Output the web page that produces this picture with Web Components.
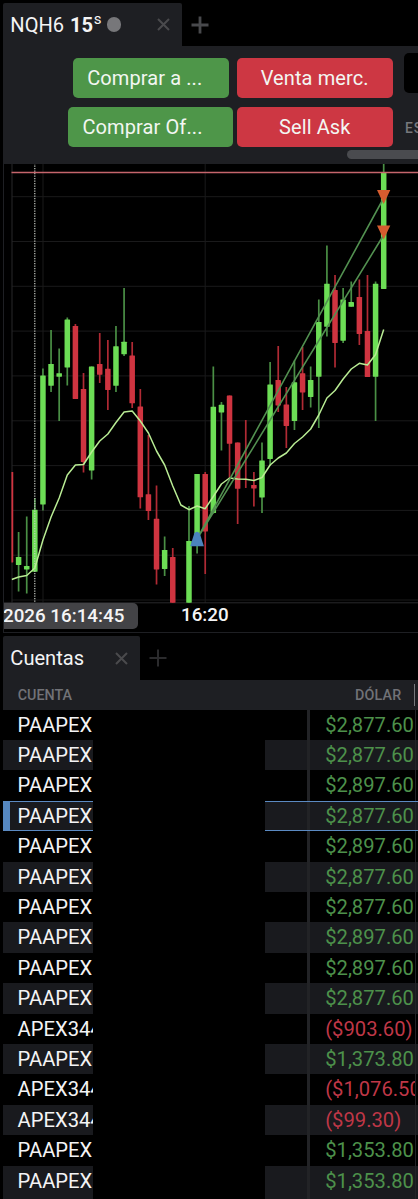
<!DOCTYPE html>
<html lang="es">
<head>
<meta charset="utf-8">
<title>NQH6</title>
<style>
    body {
        margin: 0;
        background: #000;
        color: #f4f4f5;
        font-family: Roboto, "Liberation Sans", sans-serif;
        overflow: hidden;
    }
</style>
</head>
<body>
<trading-app></trading-app>
<script>
class PanelTab extends HTMLElement {
    constructor() {
        super();
        this.attachShadow({ mode: 'open' });
    }
    connectedCallback() {
        this.shadowRoot.innerHTML = `
            <style>
                :host {
                    display: flex;
                    height: 43px;
                    align-items: stretch;
                }
                .tab {
                    display: flex;
                    align-items: center;
                    justify-content: space-between;
                    width: var(--tab-width);
                    box-sizing: border-box;
                    padding: 0 12.3px 0 7.3px;
                    background: #1e1f23;
                    border-radius: 2px 2px 0 0;
                    font-size: 20.1px;
                    white-space: nowrap;
                }
                svg { display: block; fill: none; }
                .close { stroke: #4a4a4d; stroke-width: 2; }
                .add {
                    stroke: var(--add-color, #48494c);
                    stroke-width: var(--add-weight, 2.8);
                    margin: auto 0 auto 8.5px;
                }
            </style>
            <div class="tab">
                <slot></slot>
                <svg class="close" width="13" height="13" viewBox="0 0 13 13"><path d="M1 1 12 12M12 1 1 12"/></svg>
            </div>
            <svg class="add" width="18" height="18" viewBox="0 0 18 18"><path d="M9 0.5V17.5M0.5 9H17.5"/></svg>
        `;
    }
}
customElements.define('panel-tab', PanelTab);

class TradeButton extends HTMLElement {
    constructor() {
        super();
        this.attachShadow({ mode: 'open' });
    }
    connectedCallback() {
        this.shadowRoot.innerHTML = `
            <style>
                :host { display: block; }
                button {
                    display: block;
                    width: 100%;
                    height: 40px;
                    padding: 0 1px 0 0;
                    border: 0;
                    border-radius: 5px;
                    background: #4e9649;
                    color: #f3f6f2;
                    font: 20px Roboto, sans-serif;
                    letter-spacing: 0.1px;
                    white-space: nowrap;
                }
                :host([side="buy"]) button { text-align: left; padding-left: 14.5px; }
                :host([side="sell"]) button { background: #cd3743; }
            </style>
            <button><slot></slot></button>
        `;
    }
}
customElements.define('trade-button', TradeButton);

class OrderBar extends HTMLElement {
    constructor() {
        super();
        this.attachShadow({ mode: 'open' });
    }
    connectedCallback() {
        this.shadowRoot.innerHTML = `
            <style>
                :host {
                    display: block;
                    position: relative;
                    height: 118px;
                    box-sizing: border-box;
                    padding-top: 11.7px;
                    background: #1e1f23;
                    overflow: hidden;
                }
                .row {
                    display: flex;
                    gap: 8.5px;
                    margin: 0 0 9.3px 69.7px;
                }
                .row.second { gap: 4.3px; margin-left: 65px; }
                trade-button { width: 156px; flex: none; }
                .second trade-button[side="buy"] { width: 165px; }
                .qty {
                    flex: none;
                    width: 60px;
                    height: 40px;
                    margin: -4.5px 0 0 2.5px;
                    border-radius: 5px;
                    background: #000;
                }
                .label {
                    flex: none;
                    margin: 13.5px 0 0 7.5px;
                    color: #77787c;
                    font-size: 13.8px;
                    font-weight: 500;
                    letter-spacing: 0.8px;
                }
                .scroll {
                    position: absolute;
                    left: 343.5px;
                    top: 104px;
                    width: 100px;
                    height: 9px;
                    border-radius: 5px;
                    background: #4a4b4f;
                }
            </style>
            <div class="row">
                <trade-button side="buy">Comprar a ...</trade-button>
                <trade-button side="sell">Venta merc.</trade-button>
                <div class="qty"></div>
            </div>
            <div class="row second">
                <trade-button side="buy">Comprar Of...</trade-button>
                <trade-button side="sell">Sell Ask</trade-button>
                <div class="label">ES</div>
            </div>
            <div class="scroll"></div>
        `;
    }
}
customElements.define('order-bar', OrderBar);

// [slot, side, high, body top, body bottom, low]
const CANDLES = [
    [0, 'r', 472, 472, 562.5, 562.5],
    [1, 'g', 532, 557, 565, 591.5],
    [2, 'g', 516.5, 566, 569.5, 593.5],
    [3, 'g', 498, 509.7, 571.7, 571.7],
    [4, 'g', 368.5, 375.5, 504.5, 510.5],
    [5, 'g', 330, 364, 385.7, 392],
    [6, 'g', 348.5, 373.2, 376.7, 421],
    [7, 'g', 317.5, 319.5, 367.5, 385.5],
    [8, 'r', 324, 326, 399, 399],
    [9, 'r', 373, 389, 462, 472.5],
    [10, 'g', 366.5, 366.5, 470.5, 479.5],
    [11, 'r', 333, 364, 374.7, 383],
    [12, 'r', 340, 368.7, 390, 410],
    [13, 'g', 326, 346.3, 385.7, 392],
    [14, 'g', 288, 341.8, 354.2, 356],
    [15, 'r', 342, 355.5, 403.3, 408],
    [16, 'r', 389, 406.5, 497.3, 508.5],
    [17, 'r', 435, 494.3, 511, 520],
    [18, 'r', 485.5, 518.7, 569.5, 584.5],
    [19, 'g', 536.5, 550, 569, 576],
    [20, 'r', 548, 557, 602.7, 602.7],
    [22, 'g', 506, 541, 602.7, 602.7],
    [23, 'g', 474, 474, 540, 553.5],
    [24, 'r', 472, 474, 531.5, 574],
    [25, 'g', 366.5, 406.7, 513, 513.5],
    [26, 'g', 402, 404.7, 412.5, 450.5],
    [27, 'r', 395.5, 395.5, 443.7, 479],
    [28, 'r', 442.5, 442.5, 488.7, 524],
    [29, 'r', 420, 480.5, 480.5, 488],
    [30, 'r', 472, 485, 488.5, 506.5],
    [31, 'g', 442.5, 460.5, 497.5, 513],
    [32, 'g', 362, 384.5, 459, 466],
    [33, 'r', 346, 380, 405.5, 412],
    [34, 'r', 387, 404.5, 426, 448],
    [35, 'g', 360.5, 382.3, 421, 430],
    [36, 'r', 347, 373.3, 392.5, 410],
    [37, 'g', 366.5, 380, 397, 407.5],
    [38, 'g', 299.5, 322, 376.7, 428],
    [39, 'g', 245.5, 283.7, 326.7, 336.5],
    [40, 'r', 275, 290, 343, 367.5],
    [41, 'g', 288, 299.5, 340.7, 343],
    [42, 'g', 281.5, 302, 306.8, 306.8],
    [43, 'r', 279.5, 297, 334, 345],
    [44, 'r', 275, 331, 377, 377],
    [45, 'g', 281.5, 283.7, 376.7, 421],
    [46, 'g', 163, 172.5, 289, 289]
];

const AVERAGE = [
    579.5, 577, 575.5, 568, 540, 517, 498, 475, 465, 464.5, 452, 441, 434, 422.5, 412, 411,
    421, 433, 451, 465, 486, 505, 509.7, 506, 508.7, 496.5, 484, 478, 479, 479.3, 480.5, 477.5,
    465, 458, 453, 443.5, 437, 429, 415, 398, 390.5, 379, 369, 363.3, 365, 354.5, 329.5
];

const GRID = [196.7, 241.5, 286.3, 331.1, 375.9, 420.8, 465.6, 510.4, 555.2, 600];

class PriceChart extends HTMLElement {
    constructor() {
        super();
        this.attachShadow({ mode: 'open' });
    }
    x(slot) {
        return +(10.5 + slot * 8.113).toFixed(2);
    }
    candle([slot, side, high, top, bottom, low]) {
        const x = this.x(slot);
        return `<path class="wick ${side}" d="M${x} ${high}V${low}"/>
            <rect class="${side}" x="${x - 2.75}" y="${top}" width="5.5" height="${bottom - top}" rx="0.4"/>`;
    }
    connectedCallback() {
        const average = AVERAGE.map((y, i) => `${i ? this.x(i) : 11.7},${y}`).join(' ');
        this.shadowRoot.innerHTML = `
            <style>
                :host {
                    display: block;
                    position: relative;
                    height: 469px;
                    overflow: hidden;
                    border-left: 1px solid #1e1f23;
                    border-bottom: 1px solid #1e1f23;
                    box-sizing: border-box;
                }
                svg { display: block; margin-left: -4px; }
                .grid { stroke: #1a1a1b; stroke-width: 1; fill: none; }
                .wick { stroke-width: 1.7; }
                rect.g { fill: #6cdd55; }
                rect.r { fill: #cf3440; }
                .wick.g { stroke: #4a8f45; }
                .wick.r { stroke: #b02a34; }
                .time {
                    position: absolute;
                    top: 439px;
                    font-size: 18.8px;
                    font-weight: 500;
                    line-height: 27.5px;
                    white-space: nowrap;
                }
                .cursor {
                    left: -1px;
                    width: 135px;
                    height: 26px;
                    background: #434346;
                    border-radius: 0 5px 5px 0;
                }
                .tick { left: 177px; line-height: 25px; }
            </style>
            <svg width="418" height="440" viewBox="0 164 418 440">
                <defs><clipPath id="plot"><rect x="11.5" y="163" width="407" height="440"/></clipPath></defs>
                <path class="grid" d="${GRID.map(y => `M12 ${y}H418`).join('')}M43 163V603M205.2 163V603"/>
                <path class="grid" style="stroke:#29292b" d="M12 163V603M4 602.8H418"/>
                <g clip-path="url(#plot)">
                    ${CANDLES.map(c => this.candle(c)).join('')}
                    <path d="M34.8 163V603" stroke="#c9cec6" stroke-width="1.2" stroke-dasharray="1.3 1.2"/>
                    <path d="M11 172.5H418" stroke="#c5656c" stroke-width="1.5"/>
                    <polyline points="${average}" fill="none" stroke="#b9ec94" stroke-width="1.5" stroke-linejoin="round"/>
                    <path d="M197 539 383.7 198M197 539 383.7 235" fill="none" stroke="#529050" stroke-width="1.6"/>
                    <path d="M377 190H390.3L383.7 204ZM377 225.5H390.3L383.7 239.5Z" fill="#d55c2f"/>
                    <path d="M190.2 546.3H203.9L199.8 533.5Q197 530 194.2 533.5Z" fill="#4b83bd"/>
                </g>
            </svg>
            <div class="time cursor">2026 16:14:45</div>
            <div class="time tick">16:20</div>
        `;
    }
}
customElements.define('price-chart', PriceChart);

class AccountRow extends HTMLElement {
    constructor() {
        super();
        this.attachShadow({ mode: 'open' });
    }
    connectedCallback() {
        this.shadowRoot.innerHTML = `
            <style>
                :host {
                    display: grid;
                    grid-template-columns: 90px 172px 42px 3px 105px 1px 1fr;
                    height: 30.4px;
                    box-sizing: border-box;
                    background: var(--row, #000);
                    font-size: 20.2px;
                    line-height: 30.4px;
                    white-space: nowrap;
                }
                :host([striped]) { --row: #191a1e; }
                :host([selected]) {
                    border-top: 1.4px solid #5b8ac2;
                    border-bottom: 1.4px solid #5b8ac2;
                    line-height: 29px;
                }
                .name {
                    padding-left: 14.6px;
                    overflow: hidden;
                }
                :host([selected]) .name {
                    border-left: 7.5px solid #5587c0;
                    padding-left: 7.6px;
                }
                .mask { background: #000; }
                :host([selected]) .mask { margin: -2px 0; }
                .rule { background: #222326; }
                .amount {
                    padding-left: 15.2px;
                    overflow: hidden;
                    color: #4d914b;
                }
                :host([loss]) .amount { color: #bf3747; }
            </style>
            <div class="name"><slot></slot></div>
            <div class="mask"></div>
            <div></div>
            <div class="rule"></div>
            <div class="amount"><slot name="amount"></slot></div>
            <div class="rule"></div>
        `;
    }
}
customElements.define('account-row', AccountRow);

const ACCOUNTS = [
    ['PAAPEX', '$2,877.60'],
    ['PAAPEX', '$2,877.60'],
    ['PAAPEX', '$2,897.60'],
    ['PAAPEX', '$2,877.60'],
    ['PAAPEX', '$2,897.60'],
    ['PAAPEX', '$2,877.60'],
    ['PAAPEX', '$2,877.60'],
    ['PAAPEX', '$2,897.60'],
    ['PAAPEX', '$2,897.60'],
    ['PAAPEX', '$2,877.60'],
    ['APEX344', '($903.60)'],
    ['PAAPEX', '$1,373.80'],
    ['APEX344', '($1,076.50)'],
    ['APEX344', '($99.30)'],
    ['PAAPEX', '$1,353.80'],
    ['PAAPEX', '$1,353.80']
];
const SELECTED = 3;

class AccountTable extends HTMLElement {
    constructor() {
        super();
        this.attachShadow({ mode: 'open' });
    }
    connectedCallback() {
        const rows = ACCOUNTS.map(([name, amount], i) => `
            <account-row ${i % 2 ? 'striped' : ''} ${i === SELECTED ? 'selected' : ''} ${amount[0] === '(' ? 'loss' : ''}>
                ${name}<span slot="amount">${amount}</span>
            </account-row>`).join('');
        this.shadowRoot.innerHTML = `
            <style>
                :host { display: block; }
                header {
                    display: flex;
                    justify-content: space-between;
                    align-items: center;
                    height: 29.7px;
                    box-sizing: border-box;
                    padding: 0 3px 0 14.7px;
                    background: #1e1f23;
                    color: #717277;
                    font-size: 14.3px;
                    font-weight: 500;
                }
                .end { display: flex; align-items: center; gap: 12px; letter-spacing: 0.2px; }
                .end i { width: 1.5px; height: 22px; background: #77787c; }
                account-row:last-child { height: 34px; }
            </style>
            <header>
                <span>CUENTA</span>
                <span class="end">DÓLAR<i></i></span>
            </header>
            <div>${rows}</div>
        `;
    }
}
customElements.define('account-table', AccountTable);

class TradingApp extends HTMLElement {
    constructor() {
        super();
        this.attachShadow({ mode: 'open' });
    }
    connectedCallback() {
        this.shadowRoot.innerHTML = `
            <style>
                :host {
                    display: block;
                    height: 1199px;
                    box-sizing: border-box;
                    padding: 3px 0 0 3px;
                    overflow: hidden;
                }
                .chart-tab { --tab-width: 179px; }
                .symbol { display: flex; align-items: center; }
                .symbol b { margin-left: 6px; }
                .symbol small { font-size: 15px; margin-top: -11px; margin-left: 0.5px; }
                .dot {
                    width: 14.5px;
                    height: 14.5px;
                    margin-left: 5.5px;
                    border-radius: 50%;
                    background: #77777a;
                }
                .accounts-tab {
                    --tab-width: 137px;
                    --add-color: #2b2b2d;
                    --add-weight: 2;
                    height: 44px;
                    margin-top: 3px;
                }
            </style>
            <panel-tab class="chart-tab">
                <span class="symbol">NQH6<b>15</b><small>s</small><span class="dot"></span></span>
            </panel-tab>
            <order-bar></order-bar>
            <price-chart></price-chart>
            <panel-tab class="accounts-tab">Cuentas</panel-tab>
            <account-table></account-table>
        `;
    }
}
customElements.define('trading-app', TradingApp);
</script>
</body>
</html>
